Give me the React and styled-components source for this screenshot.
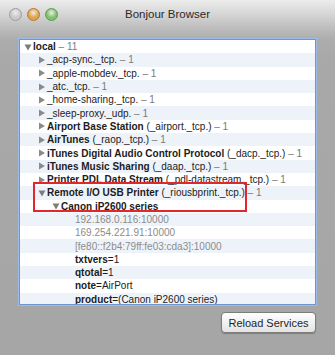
import React from "react";
import styled, { createGlobalStyle } from "styled-components";

const GlobalStyle = createGlobalStyle`
  html, body {
    margin: 0;
    padding: 0;
  }
  body {
    font-family: "Liberation Sans", Arial, sans-serif;
  }
`;

const rows = [
  { depth: 0, arrow: "down", parts: [["local", "bold"], [" – 11", "count"]] },
  { depth: 1, arrow: "right", parts: [["_acp-sync._tcp.", "normal"], [" – 1", "count"]] },
  { depth: 1, arrow: "right", parts: [["_apple-mobdev._tcp.", "normal"], [" – 1", "count"]] },
  { depth: 1, arrow: "right", parts: [["_atc._tcp.", "normal"], [" – 1", "count"]] },
  { depth: 1, arrow: "right", parts: [["_home-sharing._tcp.", "normal"], [" – 1", "count"]] },
  { depth: 1, arrow: "right", parts: [["_sleep-proxy._udp.", "normal"], [" – 1", "count"]] },
  { depth: 1, arrow: "right", parts: [["Airport Base Station ", "bold"], ["(_airport._tcp.)", "normal"], [" – 1", "count"]] },
  { depth: 1, arrow: "right", parts: [["AirTunes ", "bold"], ["(_raop._tcp.)", "normal"], [" – 1", "count"]] },
  { depth: 1, arrow: "right", parts: [["iTunes Digital Audio Control Protocol ", "bold"], ["(_dacp._tcp.)", "normal"], [" – 1", "count"]] },
  { depth: 1, arrow: "right", parts: [["iTunes Music Sharing ", "bold"], ["(_daap._tcp.)", "normal"], [" – 1", "count"]] },
  { depth: 1, arrow: "right", parts: [["Printer PDL Data Stream ", "bold"], ["(_pdl-datastream._tcp.)", "normal"], [" – 1", "count"]] },
  { depth: 1, arrow: "down", parts: [["Remote I/O USB Printer ", "bold"], ["(_riousbprint._tcp.)", "normal"], [" – 1", "count"]] },
  { depth: 2, arrow: "down", parts: [["Canon iP2600 series", "bold"]] },
  { depth: 3, parts: [["192.168.0.116:10000", "addr"]] },
  { depth: 3, parts: [["169.254.221.91:10000", "addr"]] },
  { depth: 3, parts: [["[fe80::f2b4:79ff:fe03:cda3]:10000", "addr"]] },
  { depth: 3, parts: [["txtvers", "bold"], ["=1", "normal"]] },
  { depth: 3, parts: [["qtotal", "bold"], ["=1", "normal"]] },
  { depth: 3, parts: [["note", "bold"], ["=AirPort", "normal"]] },
  { depth: 3, parts: [["product", "bold"], ["=(Canon iP2600 series)", "normal"]] },
];

const Arrow = ({ dir }) => (
  <svg width="8" height="8" viewBox="0 0 8 8">
    {dir === "down" ? (
      <polygon points="0.5,1.5 7.5,1.5 4,7.5" fill="#7d7d7d" />
    ) : (
      <polygon points="1,0.5 7,4 1,7.5" fill="#8a8a8a" />
    )}
  </svg>
);

const App = () => {
  return (
    <>
      <GlobalStyle />
      <Window>
        <TitleBar>
          <Lights>
            <Light $c="#c9c9c9" $e="#9c9c9c" />
            <Light $c="#e2a24a" $e="#b7772a" />
            <Light $c="#7fbf6e" $e="#5a9a4c" />
          </Lights>
          <Title>Bonjour Browser</Title>
        </TitleBar>
        <Tree>
          {rows.map((r, i) => (
            <Row key={i} $depth={r.depth} $odd={i % 2 === 1}>
              <ArrowCell>{r.arrow && <Arrow dir={r.arrow} />}</ArrowCell>
              {r.parts.map(([t, k], j) => (
                <Part key={j} $kind={k}>
                  {t}
                </Part>
              ))}
            </Row>
          ))}
          <Highlight />
        </Tree>
        <Footer>
          <Button>Reload Services</Button>
        </Footer>
      </Window>
    </>
  );
};

export default App;

const Window = styled.div`
  width: 335px;
  height: 355px;
  box-sizing: border-box;
  background: linear-gradient(
    #ececec 0px,
    #d6d6d6 14px,
    #bdbdbd 28px,
    #acacac 40px,
    #a8a8a8 60px,
    #a6a6a6 100%
  );
  display: flex;
  flex-direction: column;
`;

const TitleBar = styled.div`
  position: relative;
  height: 30px;
  display: flex;
  justify-content: center;
`;

const Lights = styled.div`
  position: absolute;
  left: 9px;
  top: 8px;
  display: flex;
  gap: 5px;
`;

const Light = styled.div`
  width: 11px;
  height: 11px;
  border-radius: 50%;
  background: radial-gradient(circle at 50% 35%, #fff8 0, ${(p) => p.$c} 55%);
  border: 0.5px solid ${(p) => p.$e};
`;

const Title = styled.div`
  font-family: "Liberation Sans", Arial, sans-serif;
  font-size: 11.5px;
  color: #2a2a2a;
  margin-top: 8px;
`;

const Tree = styled.div`
  position: relative;
  margin: 9px 0 0 19px;
  width: 297px;
  height: 266px;
  box-sizing: border-box;
  background: #fff;
  border: 1px solid #6f97cf;
  box-shadow: 0 0 0 1px #9dbbe6;
  overflow: hidden;
`;

const Row = styled.div`
  height: 13.3px;
  display: flex;
  align-items: center;
  white-space: nowrap;
  padding-left: ${(p) => 4 + p.$depth * 14}px;
  background: ${(p) => (p.$odd ? "#eef3fa" : "#fff")};
  font-size: 10px;
`;

const ArrowCell = styled.span`
  width: 9px;
  height: 8px;
  display: inline-flex;
  flex-shrink: 0;
`;

const Part = styled.span`
  white-space: pre;
  font-weight: ${(p) => (p.$kind === "bold" ? 700 : 400)};
  color: ${(p) =>
    p.$kind === "count" ? "#7a7a7a" : p.$kind === "addr" ? "#8c8c8c" : "#1c1c1c"};
`;

const Highlight = styled.div`
  position: absolute;
  left: 13px;
  top: 142px;
  width: 214px;
  height: 30px;
  box-sizing: border-box;
  border: 2px solid #e3262b;
  pointer-events: none;
`;

const Footer = styled.div`
  display: flex;
  justify-content: flex-end;
  padding: 7px 19px 0 0;
`;

const Button = styled.button`
  width: 95px;
  height: 21px;
  padding: 0;
  font-family: "Liberation Sans", Arial, sans-serif;
  font-size: 11px;
  color: #1e1e1e;
  background: linear-gradient(#ffffff, #f1f1f1 50%, #e4e4e4);
  border: 1px solid #7c7c7c;
  border-radius: 4px;
  box-shadow: 0 1px 1px rgba(0, 0, 0, 0.25);
`;
